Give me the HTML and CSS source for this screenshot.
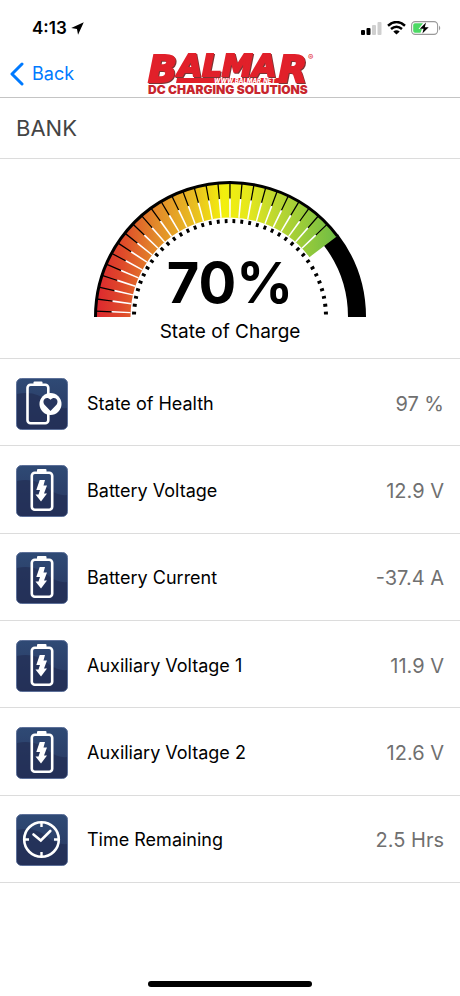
FILE: index.html
```html
<!DOCTYPE html>
<html lang="en">
<head>
	<title>Balmar - Bank</title>
	<meta charset="utf-8">
	<meta name="viewport" content="width=device-width, initial-scale=1">
	<link rel="stylesheet" href="styles.css">
</head>
<body>
<!-- shared icon shapes -->
<svg class="defs" width="0" height="0" aria-hidden="true">
	<defs>
		<linearGradient id="tileFill" x1="0" y1="0" x2="0" y2="1">
			<stop offset="0" stop-color="#2f4a75"/>
			<stop offset="1" stop-color="#28365f"/>
		</linearGradient>
		<symbol id="tile" viewBox="0 0 52 52">
			<rect x="0.5" y="0.5" width="51" height="51" rx="5" fill="url(#tileFill)" stroke="#5d7099"/>
			<path d="M1 16 Q20 12 34 25 Q42 31 51 30 V46 Q51 51 46 51 H6 Q1 51 1 46 Z" fill="#232f55" opacity="0.75"/>
		</symbol>
		<symbol id="battery" viewBox="0 0 52 52">
			<use href="#tile"/>
			<rect x="15.8" y="7.8" width="20.4" height="37" rx="3" fill="none" stroke="#fff" stroke-width="2.6"/>
			<rect x="21" y="4" width="9.5" height="4" rx="1" fill="#fff"/>
			<path d="M23.7 15 H29 L27.5 20.5 H31 L28 28.5 H31 L25 36.5 L19.5 29.5 H22.5 L24 25 H20.3 Z" fill="#fff"/>
		</symbol>
		<symbol id="health" viewBox="0 0 52 52">
			<use href="#tile"/>
			<rect x="11.5" y="6.7" width="20.8" height="38.6" rx="3" fill="none" stroke="#fff" stroke-width="2.6"/>
			<rect x="17.5" y="3.5" width="9" height="4" rx="1" fill="#fff"/>
			<circle cx="34.5" cy="26" r="11" fill="#fff"/>
			<path d="M34.5 33 L28.3 26.5 C25.5 22 30.5 17.5 34.5 21.8 C38.5 17.5 43.5 22 40.7 26.5 Z" fill="#28365f"/>
		</symbol>
		<symbol id="clock" viewBox="0 0 52 52">
			<use href="#tile"/>
			<circle cx="25.5" cy="25.5" r="17.3" fill="none" stroke="#fff" stroke-width="2.6"/>
			<path d="M25.5 9 V13 M25.5 38 V42 M9 25.5 H13 M38 25.5 H42" stroke="#fff" stroke-width="2.4"/>
			<path d="M17.5 20.5 L24.8 26.5 L34.3 17" fill="none" stroke="#fff" stroke-width="2.6" stroke-linecap="round"/>
		</symbol>
	</defs>
</svg>

<div class="status">
	<span class="time">4:13</span>
	<svg width="13" height="13" viewBox="0 0 12 12"><path d="M11.8 0.2 L0.2 5.5 L5.5 6.5 L6.5 11.8 Z"/></svg>
	<div class="status-icons">
		<svg width="21" height="13" viewBox="0 0 21 13">
			<rect x="0" y="8" width="4" height="5" rx="1"/>
			<rect x="5.5" y="6" width="4" height="7" rx="1"/>
			<rect x="11" y="3" width="4" height="10" rx="1" fill="#cfcfcf"/>
			<rect x="16.5" y="0" width="4" height="13" rx="1" fill="#cfcfcf"/>
		</svg>
		<svg width="19" height="14" viewBox="0 0 19 14">
			<path d="M1 4.7 Q9.5 -2.6 18 4.7" fill="none" stroke="#000" stroke-width="2.5"/>
			<path d="M4 8 Q9.5 3.4 15 8" fill="none" stroke="#000" stroke-width="2.5"/>
			<path d="M6.3 10.4 Q9.5 8 12.7 10.4 L9.5 13.6 Z"/>
		</svg>
		<svg width="30" height="14" viewBox="0 0 30 14">
			<rect x="0.6" y="0.6" width="26" height="12.8" rx="3.6" fill="#fff" stroke="#999" stroke-width="1.1"/>
			<path d="M28 4.5 Q30.5 7 28 9.5 Z" fill="#999"/>
			<path d="M4 2.2 H12 L7.5 8 H11 L9.5 11.8 H4 Q2.2 11.8 2.2 10 V4 Q2.2 2.2 4 2.2 Z" fill="#4cd964"/>
			<path d="M15 1.5 L8.8 7.8 H12.6 L11.4 12.5 L17.7 6.2 H13.8 Z"/>
		</svg>
	</div>
</div>

<header class="nav">
	<a class="back" href="#">
		<svg width="14" height="24" viewBox="0 0 14 24"><path d="M12 2 L2 12 L12 22" fill="none" stroke="#007aff" stroke-width="3" stroke-linecap="round" stroke-linejoin="round"/></svg>
		Back
	</a>
	<svg class="logo" width="164" height="44" viewBox="0 0 164 44" role="img" aria-label="Balmar DC Charging Solutions">
		<path d="M29 26 H133 L132 31 H28 Z" fill="#e1202a"/>
		<g class="logo-name">
			<text class="logo-big" x="0" y="30">B</text>
			<text class="logo-mid" x="30" y="24">ALMA</text>
			<text class="logo-big" x="130" y="30">R</text>
		</g>
		<text class="logo-url" x="66" y="31">WWW.BALMAR.NET</text>
		<text class="logo-tag" x="0" y="42">DC CHARGING SOLUTIONS</text>
		<text class="logo-reg" x="160" y="8">®</text>
	</svg>
</header>

<h1 class="title">BANK</h1>

<section class="soc">
	<div class="gauge">
		<svg viewBox="0 0 272 138" aria-hidden="true">
			<defs>
				<linearGradient id="charge" gradientUnits="userSpaceOnUse" x1="0" y1="0" x2="240" y2="0">
					<stop offset="0" stop-color="#dc2430"/>
					<stop offset="0.12" stop-color="#df4a2a"/>
					<stop offset="0.26" stop-color="#e28a2a"/>
					<stop offset="0.41" stop-color="#e8bb22"/>
					<stop offset="0.54" stop-color="#f3f00c"/>
					<stop offset="0.64" stop-color="#e6e81c"/>
					<stop offset="0.76" stop-color="#bcd730"/>
					<stop offset="1" stop-color="#72be44"/>
				</linearGradient>
			</defs>
			<!-- unused part of the scale -->
			<path d="M237 61 A127 127 0 0 1 263 138" fill="none" stroke="#000" stroke-width="18"/>
			<!-- charged part -->
			<path d="M19 138 A117 117 0 0 1 229.4 67.6" fill="none" stroke="url(#charge)" stroke-width="35"/>
			<path d="M1.5 138 A134.5 134.5 0 0 1 243.4 57.1" fill="none" stroke="#000" stroke-width="3"/>
			<path d="M10 138 A126 126 0 0 1 230.9 55.1" pathLength="27" fill="none" stroke="#000" stroke-width="17" stroke-dasharray="0.11 0.89" stroke-dashoffset="-0.445"/>
			<path d="M27 138 A109 109 0 0 1 218.1 66.3" pathLength="27" fill="none" stroke="#fff" stroke-width="19" stroke-dasharray="0.16 0.84" stroke-dashoffset="-0.42"/>
			<!-- dotted inner scale -->
			<path d="M40 138 A96 96 0 0 1 232 138" pathLength="38" fill="none" stroke="#000" stroke-width="4" stroke-dasharray="0.36 0.64" stroke-dashoffset="-0.32"/>
		</svg>
		<strong class="percent">70%</strong>
	</div>
	<p class="caption">State of Charge</p>
</section>

<dl class="readings">
	<div class="row">
		<dt><svg class="icon" aria-hidden="true"><use href="#health"/></svg>State of Health</dt>
		<dd>97 %</dd>
	</div>
	<div class="row">
		<dt><svg class="icon" aria-hidden="true"><use href="#battery"/></svg>Battery Voltage</dt>
		<dd>12.9 V</dd>
	</div>
	<div class="row">
		<dt><svg class="icon" aria-hidden="true"><use href="#battery"/></svg>Battery Current</dt>
		<dd>-37.4 A</dd>
	</div>
	<div class="row">
		<dt><svg class="icon" aria-hidden="true"><use href="#battery"/></svg>Auxiliary Voltage 1</dt>
		<dd>11.9 V</dd>
	</div>
	<div class="row">
		<dt><svg class="icon" aria-hidden="true"><use href="#battery"/></svg>Auxiliary Voltage 2</dt>
		<dd>12.6 V</dd>
	</div>
	<div class="row">
		<dt><svg class="icon" aria-hidden="true"><use href="#clock"/></svg>Time Remaining</dt>
		<dd>2.5 Hrs</dd>
	</div>
</dl>

<div class="home-bar"></div>
</body>
</html>
```

FILE: styles.css
```css
* { box-sizing: border-box; }
body, h1, p, dl, dd { margin: 0; padding: 0; }
body { display: flex; flex-direction: column; min-height: 100vh; background-color: #fff; color: #000; font-family: Inter, "Liberation Sans", sans-serif; font-size: 18px; line-height: 24px; }
a { text-decoration: none; color: #007aff; }
svg { display: block; flex: none; }
.defs { position: absolute; }

/* status bar */
.status { display: flex; align-items: center; gap: 4px; height: 50px; padding: 6px 19px 0 32px; }
.time { font-size: 17px; font-weight: 600; }
.status-icons { display: flex; align-items: center; gap: 5px; margin-left: auto; }

/* nav */
.nav { display: grid; grid-template-columns: 1fr auto 1fr; align-items: center; height: 48px; padding: 0 10px; border-bottom: 1px solid #c4c4c4; }
.back { display: flex; align-items: center; gap: 8px; }
.logo { overflow: visible; }
.logo-name { fill: #e1202a; stroke: #e1202a; stroke-width: 2px; filter: drop-shadow(1px 1px 0 #7d3434); font-family: "DejaVu Sans", sans-serif; font-weight: 700; font-style: italic; }
.logo-big { font-size: 38px; }
.logo-mid { font-size: 31px; }
.logo-url { font-size: 6px; font-weight: 800; font-style: italic; fill: #fff; }
.logo-tag { font-size: 12px; font-weight: 900; fill: #c8252d; }
.logo-reg { font-size: 8px; fill: #e1202a; }

.title { padding: 18px 16px; border-bottom: 1px solid #dcdcdc; color: #444; font-size: 22px; font-weight: 400; }

/* gauge */
.soc { display: flex; flex-direction: column; align-items: center; padding: 20px 16px 14px; border-bottom: 1px solid #dcdcdc; }
.gauge { display: grid; width: 272px; max-width: 100%; }
.gauge svg, .percent { grid-area: 1 / 1; }
.percent { align-self: end; justify-self: center; padding-bottom: 6px; font-size: 56px; line-height: 56px; }
.caption { padding-top: 3px; font-size: 19px; }

/* readings */
.readings { display: grid; grid-auto-rows: 1fr; min-height: 524px; }
.row { display: flex; align-items: center; justify-content: space-between; padding: 3px 16px 0; border-bottom: 1px solid #dcdcdc; }
.row dt { display: flex; align-items: center; gap: 19px; }
.row dd { color: #707070; font-size: 20px; }
.icon { width: 52px; height: 52px; }

.home-bar { width: 164px; height: 6px; margin: auto auto 9px; border-radius: 3px; background-color: #000; }
```
